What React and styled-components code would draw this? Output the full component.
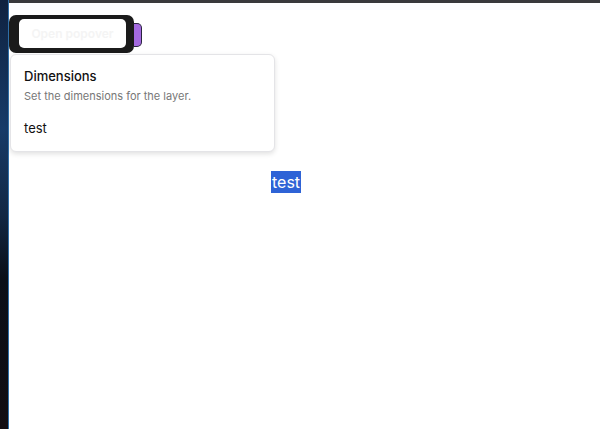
import React from "react";
import styled, { createGlobalStyle } from "styled-components";

const Global = createGlobalStyle`
  html, body { margin: 0; padding: 0; background: #fff; }
  body { font-family: Inter, "Noto Sans", sans-serif; overflow: hidden; }
`;

const Frame = styled.div`
  display: flex;
  width: 600px;
  height: 429px;
`;

const SideStrip = styled.div`
  width: 8px;
  flex: none;
  background: linear-gradient(180deg, #0f2240 0%, #173b68 30%, #122844 50%, #0a0f18 65%, #120d12 100%);
  border-right: 1px solid #2f6fa8;
`;

const Main = styled.div`
  flex: 1;
  display: flex;
  flex-direction: column;
  position: relative;
`;

const TopBar = styled.div`
  height: 3px;
  background: #3a3a3c;
  flex: none;
`;

const Stage = styled.div`
  position: relative;
  padding-top: 12px;
`;

const TriggerWrap = styled.div`
  display: flex;
  align-items: center;
`;

const Trigger = styled.button`
  width: 125px;
  height: 38px;
  box-sizing: border-box;
  background: #1b1b1b;
  border: none;
  border-radius: 7px;
  padding: 4px 8px 5px 10px;
  display: flex;
  cursor: pointer;
`;

const TriggerFace = styled.span`
  flex: 1;
  background: #fff;
  border-radius: 5px;
  display: flex;
  align-items: center;
  justify-content: center;
  font-family: Inter, sans-serif;
  font-weight: 600;
  font-size: 12px;
  color: #f4f4f4;
`;

const Tab = styled.span`
  width: 8px;
  height: 24px;
  margin-top: 1px;
  box-sizing: border-box;
  background: #a46ae0;
  border: 1px solid #2a2340;
  border-left: none;
  border-radius: 0 5px 5px 0;
`;

const Popover = styled.div`
  position: absolute;
  left: 1px;
  top: 51px;
  width: 265px;
  height: 98px;
  box-sizing: border-box;
  background: #fff;
  border: 1px solid #e4e4e7;
  border-radius: 6px;
  box-shadow: 0 2px 5px rgba(0, 0, 0, 0.12);
  padding: 13px 13px;
  display: flex;
  flex-direction: column;
`;

const Title = styled.div`
  font-size: 13px;
  font-weight: 500;
  color: #111;
  line-height: 16px;
`;

const Desc = styled.div`
  margin-top: 5px;
  font-size: 11px;
  color: #777;
  line-height: 14px;
`;

const Body = styled.div`
  margin-top: 17px;
  font-size: 13px;
  color: #111;
  line-height: 16px;
`;

const Selected = styled.span`
  align-self: flex-start;
  margin-left: 262px;
  margin-top: 118px;
  background: #2e63d6;
  color: #fff;
  font-size: 16px;
  line-height: 22px;
  padding: 0 1px;
`;

export default function App() {
  return (
    <>
      <Global />
      <Frame>
        <SideStrip />
        <Main>
          <TopBar />
          <Stage>
            <TriggerWrap>
              <Trigger>
                <TriggerFace>Open popover</TriggerFace>
              </Trigger>
              <Tab />
            </TriggerWrap>
            <Popover>
              <Title>Dimensions</Title>
              <Desc>Set the dimensions for the layer.</Desc>
              <Body>test</Body>
            </Popover>
          </Stage>
          <Selected>test</Selected>
        </Main>
      </Frame>
    </>
  );
}
